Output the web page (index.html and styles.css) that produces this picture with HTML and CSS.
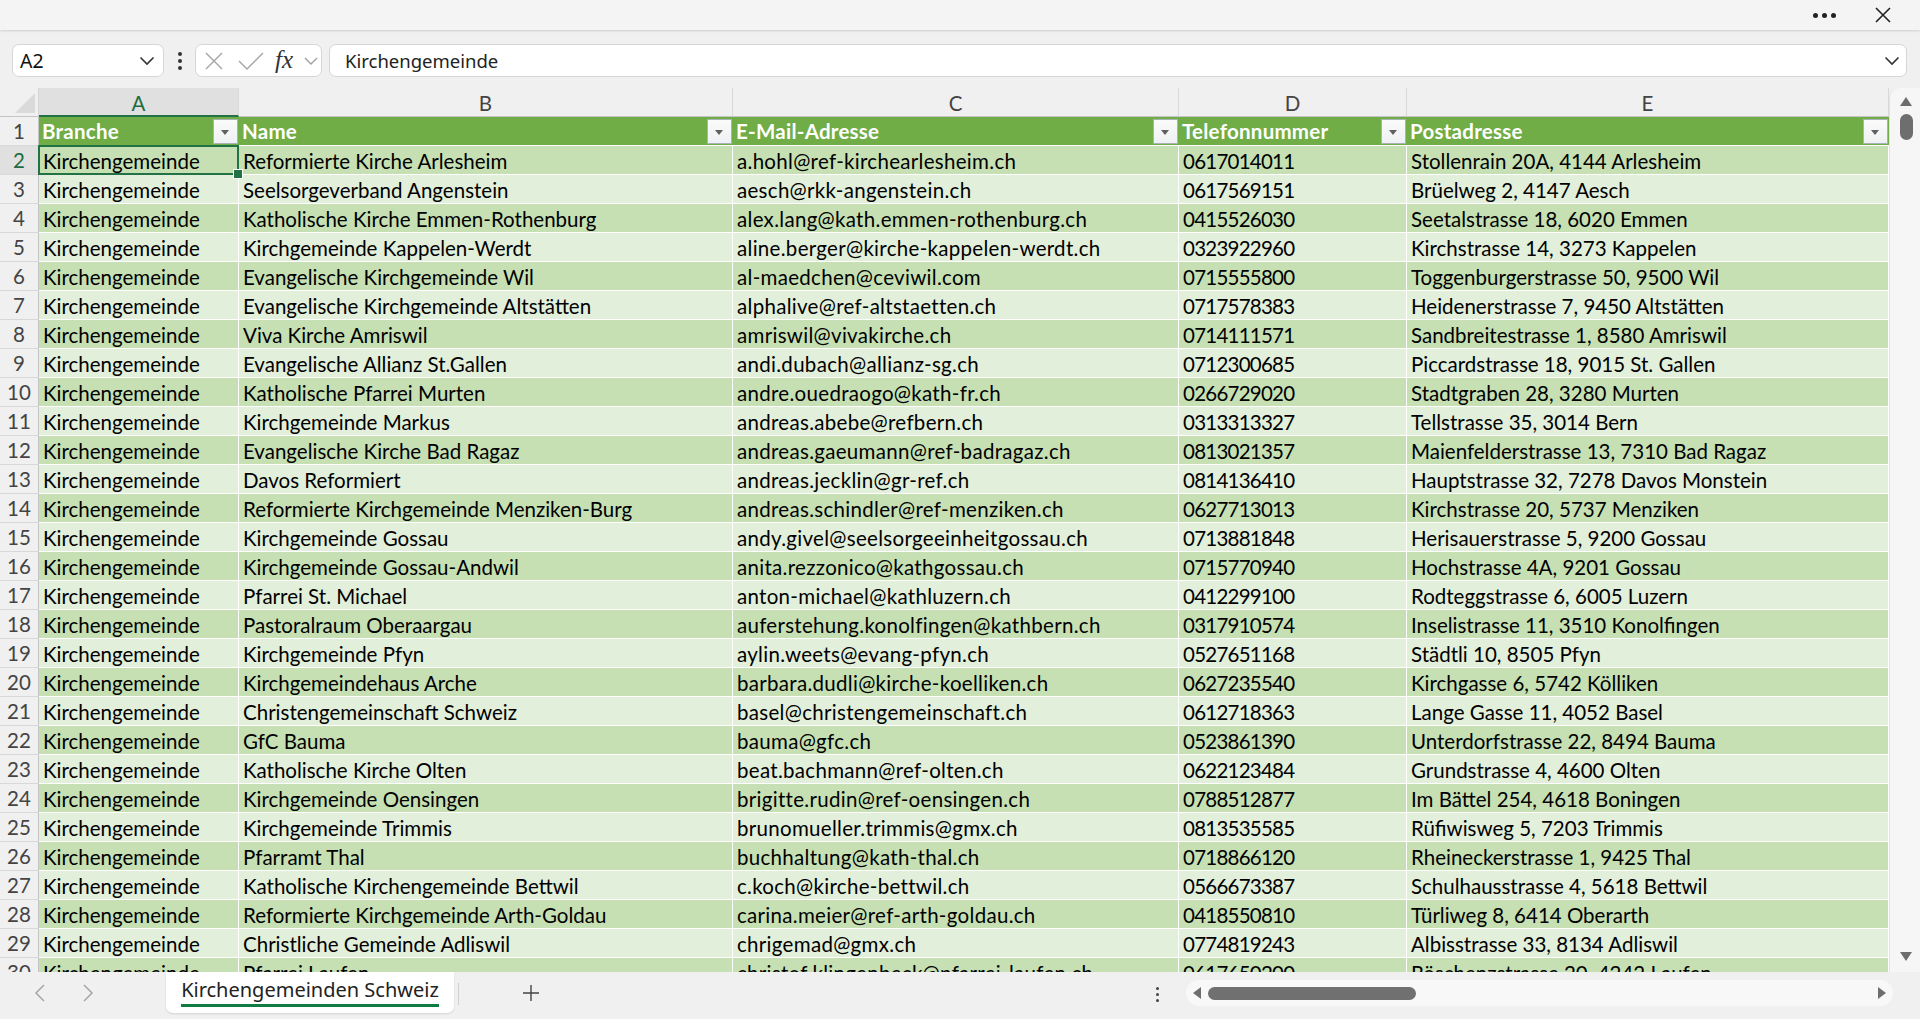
FILE: index.html
```html
<!DOCTYPE html>
<html lang="de">
<head>
<meta charset="utf-8">
<title>Kirchengemeinden Schweiz</title>
<link rel="stylesheet" href="styles.css">
</head>
<body>
<header class="titlebar">
  <span class="more"><i></i><i></i><i></i></span>
  <svg class="close" width="16" height="16" viewBox="0 0 16 16"><path d="M1 1L15 15M15 1L1 15" stroke="#222" stroke-width="1.6" fill="none"/></svg>
</header>

<div class="formula-row">
  <div class="namebox">
    <span>A2</span>
    <svg width="16" height="10" viewBox="0 0 16 10"><path d="M1.5 1.5L8 8L14.5 1.5" stroke="#333" stroke-width="1.6" fill="none"/></svg>
  </div>
  <div class="kebab"><i></i><i></i><i></i></div>
  <div class="fbuttons">
    <svg class="fcancel" width="20" height="20" viewBox="0 0 20 20"><path d="M2 2L18 18M18 2L2 18" stroke="#a8a8a8" stroke-width="1.5" fill="none"/></svg>
    <svg class="fok" width="26" height="20" viewBox="0 0 26 20"><path d="M1 10L9 18L25 2" stroke="#a8a8a8" stroke-width="1.5" fill="none"/></svg>
    <span class="fx">fx</span>
    <svg class="fdrop" width="14" height="10" viewBox="0 0 14 10"><path d="M1 2L7 8L13 2" stroke="#a0a0a0" stroke-width="1.4" fill="none"/></svg>
  </div>
  <div class="finput">
    <span>Kirchengemeinde</span>
    <svg width="16" height="10" viewBox="0 0 16 10"><path d="M1.5 1.5L8 8L14.5 1.5" stroke="#333" stroke-width="1.6" fill="none"/></svg>
  </div>
</div>

<main class="sheet">
  <div class="grid">
    <div class="corner"></div>
    <div class="ch sel">A</div>
    <div class="ch">B</div>
    <div class="ch">C</div>
    <div class="ch">D</div>
    <div class="ch">E</div>

    <div class="rh">1</div>
    <div class="hc"><span>Branche</span><b class="flt"></b></div>
    <div class="hc"><span>Name</span><b class="flt"></b></div>
    <div class="hc"><span>E-Mail-Adresse</span><b class="flt"></b></div>
    <div class="hc"><span>Telefonnummer</span><b class="flt"></b></div>
    <div class="hc"><span>Postadresse</span><b class="flt"></b></div>

    <div class="r dk"><div class="rh sel">2</div><div class="c active">Kirchengemeinde</div><div class="c">Reformierte Kirche Arlesheim</div><div class="c">a.hohl@ref-kirchearlesheim.ch</div><div class="c">0617014011</div><div class="c">Stollenrain 20A, 4144 Arlesheim</div></div>
    <div class="r lt"><div class="rh">3</div><div class="c">Kirchengemeinde</div><div class="c">Seelsorgeverband Angenstein</div><div class="c">aesch@rkk-angenstein.ch</div><div class="c">0617569151</div><div class="c">Brüelweg 2, 4147 Aesch</div></div>
    <div class="r dk"><div class="rh">4</div><div class="c">Kirchengemeinde</div><div class="c">Katholische Kirche Emmen-Rothenburg</div><div class="c">alex.lang@kath.emmen-rothenburg.ch</div><div class="c">0415526030</div><div class="c">Seetalstrasse 18, 6020 Emmen</div></div>
    <div class="r lt"><div class="rh">5</div><div class="c">Kirchengemeinde</div><div class="c">Kirchgemeinde Kappelen-Werdt</div><div class="c">aline.berger@kirche-kappelen-werdt.ch</div><div class="c">0323922960</div><div class="c">Kirchstrasse 14, 3273 Kappelen</div></div>
    <div class="r dk"><div class="rh">6</div><div class="c">Kirchengemeinde</div><div class="c">Evangelische Kirchgemeinde Wil</div><div class="c">al-maedchen@ceviwil.com</div><div class="c">0715555800</div><div class="c">Toggenburgerstrasse 50, 9500 Wil</div></div>
    <div class="r lt"><div class="rh">7</div><div class="c">Kirchengemeinde</div><div class="c">Evangelische Kirchgemeinde Altstätten</div><div class="c">alphalive@ref-altstaetten.ch</div><div class="c">0717578383</div><div class="c">Heidenerstrasse 7, 9450 Altstätten</div></div>
    <div class="r dk"><div class="rh">8</div><div class="c">Kirchengemeinde</div><div class="c">Viva Kirche Amriswil</div><div class="c">amriswil@vivakirche.ch</div><div class="c">0714111571</div><div class="c">Sandbreitestrasse 1, 8580 Amriswil</div></div>
    <div class="r lt"><div class="rh">9</div><div class="c">Kirchengemeinde</div><div class="c">Evangelische Allianz St.Gallen</div><div class="c">andi.dubach@allianz-sg.ch</div><div class="c">0712300685</div><div class="c">Piccardstrasse 18, 9015 St. Gallen</div></div>
    <div class="r dk"><div class="rh">10</div><div class="c">Kirchengemeinde</div><div class="c">Katholische Pfarrei Murten</div><div class="c">andre.ouedraogo@kath-fr.ch</div><div class="c">0266729020</div><div class="c">Stadtgraben 28, 3280 Murten</div></div>
    <div class="r lt"><div class="rh">11</div><div class="c">Kirchengemeinde</div><div class="c">Kirchgemeinde Markus</div><div class="c">andreas.abebe@refbern.ch</div><div class="c">0313313327</div><div class="c">Tellstrasse 35, 3014 Bern</div></div>
    <div class="r dk"><div class="rh">12</div><div class="c">Kirchengemeinde</div><div class="c">Evangelische Kirche Bad Ragaz</div><div class="c">andreas.gaeumann@ref-badragaz.ch</div><div class="c">0813021357</div><div class="c">Maienfelderstrasse 13, 7310 Bad Ragaz</div></div>
    <div class="r lt"><div class="rh">13</div><div class="c">Kirchengemeinde</div><div class="c">Davos Reformiert</div><div class="c">andreas.jecklin@gr-ref.ch</div><div class="c">0814136410</div><div class="c">Hauptstrasse 32, 7278 Davos Monstein</div></div>
    <div class="r dk"><div class="rh">14</div><div class="c">Kirchengemeinde</div><div class="c">Reformierte Kirchgemeinde Menziken-Burg</div><div class="c">andreas.schindler@ref-menziken.ch</div><div class="c">0627713013</div><div class="c">Kirchstrasse 20, 5737 Menziken</div></div>
    <div class="r lt"><div class="rh">15</div><div class="c">Kirchengemeinde</div><div class="c">Kirchgemeinde Gossau</div><div class="c">andy.givel@seelsorgeeinheitgossau.ch</div><div class="c">0713881848</div><div class="c">Herisauerstrasse 5, 9200 Gossau</div></div>
    <div class="r dk"><div class="rh">16</div><div class="c">Kirchengemeinde</div><div class="c">Kirchgemeinde Gossau-Andwil</div><div class="c">anita.rezzonico@kathgossau.ch</div><div class="c">0715770940</div><div class="c">Hochstrasse 4A, 9201 Gossau</div></div>
    <div class="r lt"><div class="rh">17</div><div class="c">Kirchengemeinde</div><div class="c">Pfarrei St. Michael</div><div class="c">anton-michael@kathluzern.ch</div><div class="c">0412299100</div><div class="c">Rodteggstrasse 6, 6005 Luzern</div></div>
    <div class="r dk"><div class="rh">18</div><div class="c">Kirchengemeinde</div><div class="c">Pastoralraum Oberaargau</div><div class="c">auferstehung.konolfingen@kathbern.ch</div><div class="c">0317910574</div><div class="c">Inselistrasse 11, 3510 Konolfingen</div></div>
    <div class="r lt"><div class="rh">19</div><div class="c">Kirchengemeinde</div><div class="c">Kirchgemeinde Pfyn</div><div class="c">aylin.weets@evang-pfyn.ch</div><div class="c">0527651168</div><div class="c">Städtli 10, 8505 Pfyn</div></div>
    <div class="r dk"><div class="rh">20</div><div class="c">Kirchengemeinde</div><div class="c">Kirchgemeindehaus Arche</div><div class="c">barbara.dudli@kirche-koelliken.ch</div><div class="c">0627235540</div><div class="c">Kirchgasse 6, 5742 Kölliken</div></div>
    <div class="r lt"><div class="rh">21</div><div class="c">Kirchengemeinde</div><div class="c">Christengemeinschaft Schweiz</div><div class="c">basel@christengemeinschaft.ch</div><div class="c">0612718363</div><div class="c">Lange Gasse 11, 4052 Basel</div></div>
    <div class="r dk"><div class="rh">22</div><div class="c">Kirchengemeinde</div><div class="c">GfC Bauma</div><div class="c">bauma@gfc.ch</div><div class="c">0523861390</div><div class="c">Unterdorfstrasse 22, 8494 Bauma</div></div>
    <div class="r lt"><div class="rh">23</div><div class="c">Kirchengemeinde</div><div class="c">Katholische Kirche Olten</div><div class="c">beat.bachmann@ref-olten.ch</div><div class="c">0622123484</div><div class="c">Grundstrasse 4, 4600 Olten</div></div>
    <div class="r dk"><div class="rh">24</div><div class="c">Kirchengemeinde</div><div class="c">Kirchgemeinde Oensingen</div><div class="c">brigitte.rudin@ref-oensingen.ch</div><div class="c">0788512877</div><div class="c">Im Bättel 254, 4618 Boningen</div></div>
    <div class="r lt"><div class="rh">25</div><div class="c">Kirchengemeinde</div><div class="c">Kirchgemeinde Trimmis</div><div class="c">brunomueller.trimmis@gmx.ch</div><div class="c">0813535585</div><div class="c">Rüfiwisweg 5, 7203 Trimmis</div></div>
    <div class="r dk"><div class="rh">26</div><div class="c">Kirchengemeinde</div><div class="c">Pfarramt Thal</div><div class="c">buchhaltung@kath-thal.ch</div><div class="c">0718866120</div><div class="c">Rheineckerstrasse 1, 9425 Thal</div></div>
    <div class="r lt"><div class="rh">27</div><div class="c">Kirchengemeinde</div><div class="c">Katholische Kirchengemeinde Bettwil</div><div class="c">c.koch@kirche-bettwil.ch</div><div class="c">0566673387</div><div class="c">Schulhausstrasse 4, 5618 Bettwil</div></div>
    <div class="r dk"><div class="rh">28</div><div class="c">Kirchengemeinde</div><div class="c">Reformierte Kirchgemeinde Arth-Goldau</div><div class="c">carina.meier@ref-arth-goldau.ch</div><div class="c">0418550810</div><div class="c">Türliweg 8, 6414 Oberarth</div></div>
    <div class="r lt"><div class="rh">29</div><div class="c">Kirchengemeinde</div><div class="c">Christliche Gemeinde Adliswil</div><div class="c">chrigemad@gmx.ch</div><div class="c">0774819243</div><div class="c">Albisstrasse 33, 8134 Adliswil</div></div>
    <div class="r dk"><div class="rh">30</div><div class="c">Kirchengemeinde</div><div class="c">Pfarrei Laufen</div><div class="c">christof.klingenbeck@pfarrei-laufen.ch</div><div class="c">0617650200</div><div class="c">Röschenzstrasse 20, 4242 Laufen</div></div>
  </div>

  <aside class="vscroll">
    <i class="tri up"></i>
    <i class="thumb"></i>
    <i class="tri down"></i>
  </aside>
</main>

<footer class="tabbar">
  <div class="nav">
    <svg width="12" height="20" viewBox="0 0 12 20"><path d="M10 2L2 10L10 18" stroke="#a6a6a6" stroke-width="1.5" fill="none"/></svg>
    <svg width="12" height="20" viewBox="0 0 12 20"><path d="M2 2L10 10L2 18" stroke="#a6a6a6" stroke-width="1.5" fill="none"/></svg>
  </div>
  <div class="tab"><span>Kirchengemeinden Schweiz</span></div>
  <div class="sep"></div>
  <svg class="plus" width="20" height="20" viewBox="0 0 20 20"><path d="M10 2V18M2 10H18" stroke="#444" stroke-width="1.4" fill="none"/></svg>
  <div class="kebab small"><i></i><i></i><i></i></div>
  <div class="hscroll">
    <i class="tri left"></i>
    <i class="hthumb"></i>
    <i class="tri right"></i>
  </div>
</footer>
</body>
</html>
```

FILE: styles.css
```css
* { box-sizing: border-box; }

html, body {
  margin: 0;
  height: 1019px;
  overflow: hidden;
}

body {
  background: #f0f0f0;
  font-family: "Noto Sans", "Open Sans", sans-serif;
  color: #000;
  display: flex;
  flex-direction: column;
}

/* ---------- title bar ---------- */
.titlebar {
  height: 30px;
  flex: none;
  background: #f4f4f4;
  box-shadow: 0 1px 2px rgba(0, 0, 0, 0.14);
  display: flex;
  align-items: center;
  justify-content: flex-end;
  padding-right: 29px;
  gap: 39px;
  position: relative;
  z-index: 2;
}
.titlebar .more {
  display: flex;
  gap: 4px;
}
.titlebar .more i {
  width: 5px;
  height: 5px;
  border-radius: 50%;
  background: #222;
}

/* ---------- formula row ---------- */
.formula-row {
  flex: none;
  height: 33px;
  margin: 14px 13px 11px 12px;
  display: flex;
  align-items: stretch;
}
.namebox {
  width: 152px;
  background: #fff;
  border: 1px solid #d6d6d6;
  border-radius: 7px;
  display: flex;
  align-items: center;
  justify-content: space-between;
  padding: 0 8px 0 7px;
  font-size: 19.5px;
  color: #111;
}
.kebab {
  width: 31px;
  display: flex;
  flex-direction: column;
  align-items: center;
  justify-content: center;
  gap: 3px;
}
.kebab i {
  width: 4px;
  height: 4px;
  border-radius: 50%;
  background: #333;
}
.fbuttons {
  width: 127px;
  background: #fff;
  border: 1px solid #d6d6d6;
  border-radius: 7px;
  display: flex;
  align-items: center;
  padding: 0 0 0 8px;
}
.fbuttons .fok { margin-left: 14px; }
.fbuttons .fx {
  font-family: "Liberation Serif", "DejaVu Serif", serif;
  font-style: italic;
  font-size: 25px;
  color: #333;
  margin-left: 11px;
  line-height: 1;
  width: 22px;
  padding-bottom: 3px;
}
.fbuttons .fdrop { margin-left: 7px; }
.finput {
  flex: 1;
  margin-left: 7px;
  background: #fff;
  border: 1px solid #d6d6d6;
  border-radius: 7px;
  display: flex;
  align-items: center;
  justify-content: space-between;
  padding: 0 6px 0 15px;
  font-size: 18.5px;
  color: #222;
}

/* ---------- sheet ---------- */
.sheet {
  flex: none;
  height: 884px;
  display: flex;
  overflow: hidden;
}
.grid {
  width: 1889px;
  display: grid;
  grid-template-columns: 39px 200px 494px 446px 228px 482px;
  grid-auto-rows: 29px;
  align-content: start;
  font-family: "Lato", "Noto Sans", sans-serif;
  font-size: 20.5px;
  overflow: hidden;
}
.r { display: contents; }

.corner {
  position: relative;
  border-right: 1px solid #d4d4d4;
  border-bottom: 1px solid #c4c4c4;
}
.corner::after {
  content: "";
  position: absolute;
  right: 3px;
  bottom: 3px;
  border-style: solid;
  border-width: 0 0 20px 20px;
  border-color: transparent transparent #dadada transparent;
}
.ch {
  display: flex;
  align-items: center;
  justify-content: center;
  color: #444;
  border-right: 1px solid #d8d8d8;
  border-bottom: 1px solid #c4c4c4;
  padding-top: 2px;
}
.ch.sel {
  background: #e0e0e0;
  color: #1e6c41;
  border-bottom: 2px solid #217346;
}
.rh {
  display: flex;
  align-items: center;
  justify-content: center;
  color: #444;
  border-right: 1px solid #c4c4c4;
  border-bottom: 1px solid #d8d8d8;
}
.rh.sel {
  background: #e0e0e0;
  color: #1e6c41;
}

.hc {
  background: #70ad47;
  color: #fff;
  font-weight: 700;
  letter-spacing: 0.25px;
  display: flex;
  align-items: center;
  padding-left: 3px;
  padding-right: 1px;
  border-bottom: 1px solid #fff;
  white-space: nowrap;
}
.hc span { flex: 1; }
.flt {
  width: 25px;
  height: 25px;
  background: linear-gradient(#fbfbfb, #eef0f2);
  border: 1px solid #a9b1b9;
  position: relative;
}
.flt::after {
  content: "";
  position: absolute;
  left: 7px;
  top: 10px;
  border-style: solid;
  border-width: 5px 4.5px 0 4.5px;
  border-color: #606060 transparent transparent transparent;
}

.c {
  display: flex;
  align-items: center;
  padding-left: 4px;
  padding-top: 1px;
  white-space: nowrap;
  overflow: hidden;
  border-right: 1px solid #fff;
  border-bottom: 1px solid #fff;
}
.dk .c { background: #c6e0b4; }
.lt .c { background: #e2efda; }

/* e-mail column runs a little wider, phone digits a little tighter */
.r > .c:nth-child(4) { letter-spacing: 0.3px; }
.r > .c:nth-child(5) { letter-spacing: -0.75px; }

.c.active {
  position: relative;
  overflow: visible;
  z-index: 1;
}
.c.active::before {
  content: "";
  position: absolute;
  left: -1px;
  top: -1px;
  right: -1px;
  bottom: -1px;
  border: 2px solid #217346;
}
.c.active::after {
  content: "";
  position: absolute;
  right: -5px;
  bottom: -5px;
  width: 8px;
  height: 8px;
  background: #217346;
  border: 1px solid #fff;
}

/* ---------- vertical scrollbar ---------- */
.vscroll {
  flex: 1;
  background: #f6f6f6;
  border-left: 1px solid #e2e2e2;
  border-radius: 10px 0 0 0;
  position: relative;
}
.vscroll .tri {
  position: absolute;
  left: 10px;
  border-style: solid;
}
.vscroll .up {
  top: 9px;
  border-width: 0 6.5px 9px 6.5px;
  border-color: transparent transparent #6e6e6e transparent;
}
.vscroll .down {
  bottom: 11px;
  border-width: 9px 6.5px 0 6.5px;
  border-color: #6e6e6e transparent transparent transparent;
}
.vscroll .thumb {
  position: absolute;
  left: 10px;
  top: 26px;
  width: 13px;
  height: 26px;
  border-radius: 7px;
  background: #6e6e6e;
}

/* ---------- sheet tab bar ---------- */
.tabbar {
  flex: 1;
  display: flex;
  align-items: flex-start;
  position: relative;
}
.nav {
  width: 124px;
  height: 42px;
  display: flex;
  align-items: center;
  gap: 36px;
  padding-left: 34px;
}
.tab {
  width: 288px;
  height: 41px;
  margin-left: 42px;
  background: #fff;
  border-radius: 0 0 7px 7px;
  box-shadow: 0 1px 2px rgba(0, 0, 0, 0.12);
  display: flex;
  justify-content: center;
  padding-top: 5px;
  font-size: 20px;
  color: #222;
}
.tab span {
  height: 30px;
  border-bottom: 3px solid #107c41;
  line-height: 25px;
}
.sep {
  width: 1px;
  height: 22px;
  background: #cfcfcf;
  margin: 11px 0 0 4px;
}
.plus {
  margin: 11px 0 0 62px;
}
.kebab.small {
  margin: 12px 0 0 606px;
  width: 20px;
  height: 20px;
  gap: 3px;
}
.kebab.small i {
  width: 3px;
  height: 3px;
  background: #444;
}
.hscroll {
  width: 707px;
  height: 26px;
  margin: 8px 0 0 19px;
  background: #f8f8f8;
  border-radius: 13px;
  position: relative;
}
.hscroll .tri {
  position: absolute;
  top: 7px;
  border-style: solid;
}
.hscroll .left {
  left: 7px;
  border-width: 6px 8px 6px 0;
  border-color: transparent #6e6e6e transparent transparent;
}
.hscroll .right {
  right: 7px;
  border-width: 6px 0 6px 8px;
  border-color: transparent transparent transparent #6e6e6e;
}
.hscroll .hthumb {
  position: absolute;
  left: 22px;
  top: 7px;
  width: 208px;
  height: 13px;
  border-radius: 7px;
  background: #707070;
}
```
